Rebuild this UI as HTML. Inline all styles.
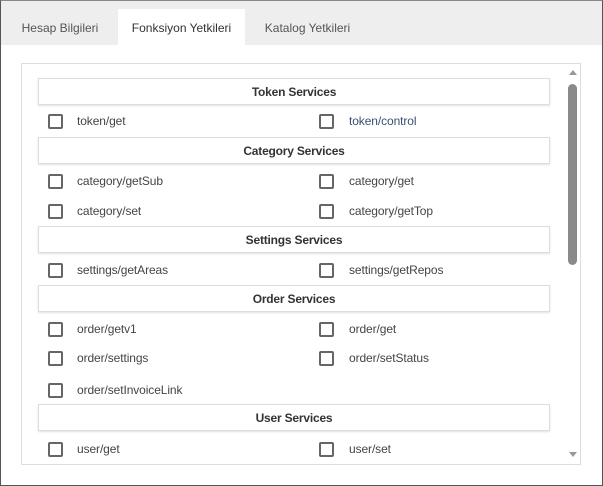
<!DOCTYPE html>
<html><head><style>
*{margin:0;padding:0;box-sizing:border-box}
body{width:603px;height:486px;background:#fff;font-family:"Liberation Sans",sans-serif;position:relative;overflow:hidden}
.frame{position:absolute;left:0;top:0;width:603px;height:486px;border:1px solid #555;border-top-color:#888}
.tabbar{position:absolute;left:1px;top:1px;width:601px;height:44px;background:#eee}
.tab{position:absolute;top:9px;height:36px;line-height:38px;font-size:12px;color:#555;text-align:center}
.tab.active{background:#fff;color:#333;left:118px;width:127px}
.box{position:absolute;left:21px;top:63px;width:560px;height:402px;border:1px solid #ddd}
.hdr{position:absolute;left:38px;width:512px;height:27px;border:1px solid #ddd;box-shadow:0 1px 2px rgba(0,0,0,.12);text-align:center;font-size:12px;font-weight:bold;color:#333;line-height:26px;letter-spacing:-0.2px}
.cb{position:absolute;width:15px;height:15px;border:2px solid #666;border-radius:2px}
.lb{position:absolute;font-size:12px;color:#444;letter-spacing:-0.1px}
.sb{position:absolute;left:568px;top:84px;width:9px;height:181px;background:#8a8a8a;border-radius:5px}
.up{position:absolute;left:569px;top:70px;width:0;height:0;border-left:4px solid transparent;border-right:4px solid transparent;border-bottom:5px solid #999}
.dn{position:absolute;left:569px;top:452px;width:0;height:0;border-left:4px solid transparent;border-right:4px solid transparent;border-top:5px solid #999}
</style></head><body>
<div class="tabbar"></div>
<div class="tab" style="left:10px;width:100px">Hesap Bilgileri</div>
<div class="tab active">Fonksiyon Yetkileri</div>
<div class="tab" style="left:255px;width:105px">Katalog Yetkileri</div>
<div class="box"></div>
<div class="hdr" style="top:78px">Token Services</div>
<div class="hdr" style="top:137px">Category Services</div>
<div class="hdr" style="top:226px">Settings Services</div>
<div class="hdr" style="top:285px">Order Services</div>
<div class="hdr" style="top:404px">User Services</div>

<div class="cb" style="left:48px;top:114px"></div><div class="lb" style="left:77px;top:114px">token/get</div>
<div class="cb" style="left:319px;top:114px"></div><div class="lb" style="left:349px;top:114px;color:#3a5070">token/control</div>

<div class="cb" style="left:48px;top:174px"></div><div class="lb" style="left:77px;top:174px">category/getSub</div>
<div class="cb" style="left:319px;top:174px"></div><div class="lb" style="left:349px;top:174px">category/get</div>
<div class="cb" style="left:48px;top:204px"></div><div class="lb" style="left:77px;top:204px">category/set</div>
<div class="cb" style="left:319px;top:204px"></div><div class="lb" style="left:349px;top:204px">category/getTop</div>

<div class="cb" style="left:48px;top:263px"></div><div class="lb" style="left:77px;top:263px">settings/getAreas</div>
<div class="cb" style="left:319px;top:263px"></div><div class="lb" style="left:349px;top:263px">settings/getRepos</div>

<div class="cb" style="left:48px;top:322px"></div><div class="lb" style="left:77px;top:322px">order/getv1</div>
<div class="cb" style="left:319px;top:322px"></div><div class="lb" style="left:349px;top:322px">order/get</div>
<div class="cb" style="left:48px;top:351px"></div><div class="lb" style="left:77px;top:351px">order/settings</div>
<div class="cb" style="left:319px;top:351px"></div><div class="lb" style="left:349px;top:351px">order/setStatus</div>
<div class="cb" style="left:48px;top:383px"></div><div class="lb" style="left:77px;top:383px">order/setInvoiceLink</div>

<div class="cb" style="left:48px;top:442px"></div><div class="lb" style="left:77px;top:442px">user/get</div>
<div class="cb" style="left:319px;top:442px"></div><div class="lb" style="left:349px;top:442px">user/set</div>

<div class="up"></div><div class="sb"></div><div class="dn"></div>
<div class="frame"></div>
</body></html>
